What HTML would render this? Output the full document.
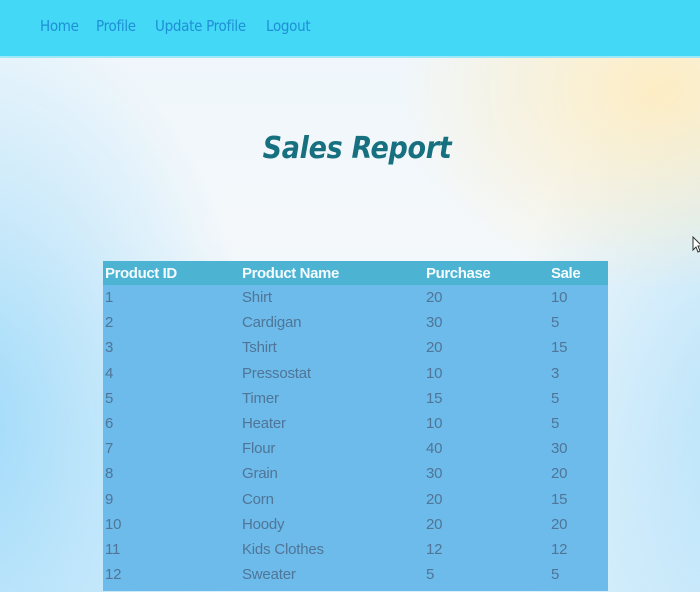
<!DOCTYPE html>
<html><head><meta charset="utf-8"><style>
html,body{margin:0;padding:0;width:700px;height:592px;overflow:hidden}
body{font-family:"Liberation Sans",sans-serif;position:relative;
background:
radial-gradient(ellipse 260px 200px at 660px 90px,rgba(255,236,190,.9),rgba(255,236,190,0)),
radial-gradient(ellipse 300px 420px at -40px 420px,rgba(150,215,250,.9),rgba(150,215,250,0)),
radial-gradient(ellipse 260px 380px at 760px 420px,rgba(170,222,250,.8),rgba(170,222,250,0)),
linear-gradient(180deg,#eef6fb 0%,#f4f8fb 40%,#dcf0fb 100%);}
.nav{position:absolute;left:0;top:0;width:700px;height:58px;background:#42d8f6;border-bottom:2px solid #9fe8f8;box-sizing:border-box}
.nav a{position:absolute;top:17px;font-size:15px;color:#1f8fd6;text-decoration:none;font-family:"DejaVu Sans Condensed","Liberation Sans",sans-serif;letter-spacing:-0.3px}
h1{position:absolute;left:0;width:714px;text-align:center;top:131px;margin:0;font-size:30px;font-style:italic;font-weight:bold;color:#17707f;font-family:"DejaVu Sans Condensed","Liberation Sans",sans-serif;letter-spacing:-0.3px}
table{position:absolute;left:103px;top:261px;width:505px;border-collapse:collapse;background:#6dbbea}
th{background:#4cb3d3;color:#f4fbff;font-weight:bold;text-align:left;height:24px;font-size:15px;padding:0 0 0 2px;letter-spacing:-0.4px}
td{height:25.2px;padding:0 0 0 2px;font-size:15px;color:#4f7598;letter-spacing:-0.2px}
tr.pad td{height:4px}
</style></head><body>
<div class="nav"><a style="left:40px">Home</a><a style="left:96px">Profile</a><a style="left:155px">Update Profile</a><a style="left:266px">Logout</a></div>
<h1>Sales Report</h1>
<table>
<colgroup><col style="width:137px"><col style="width:184px"><col style="width:125px"><col></colgroup>
<tr><th>Product ID</th><th>Product Name</th><th>Purchase</th><th>Sale</th></tr>
<tr><td>1</td><td>Shirt</td><td>20</td><td>10</td></tr>
<tr><td>2</td><td>Cardigan</td><td>30</td><td>5</td></tr>
<tr><td>3</td><td>Tshirt</td><td>20</td><td>15</td></tr>
<tr><td>4</td><td>Pressostat</td><td>10</td><td>3</td></tr>
<tr><td>5</td><td>Timer</td><td>15</td><td>5</td></tr>
<tr><td>6</td><td>Heater</td><td>10</td><td>5</td></tr>
<tr><td>7</td><td>Flour</td><td>40</td><td>30</td></tr>
<tr><td>8</td><td>Grain</td><td>30</td><td>20</td></tr>
<tr><td>9</td><td>Corn</td><td>20</td><td>15</td></tr>
<tr><td>10</td><td>Hoody</td><td>20</td><td>20</td></tr>
<tr><td>11</td><td>Kids Clothes</td><td>12</td><td>12</td></tr>
<tr><td>12</td><td>Sweater</td><td>5</td><td>5</td></tr>
<tr class="pad"><td></td><td></td><td></td><td></td></tr>
</table>
<svg style="position:absolute;left:692px;top:236px" width="10" height="18" viewBox="0 0 10 18"><path d="M1 1 L1 14 L4 11 L6 16 L8 15 L6 10 L10 10 Z" fill="#fff" stroke="#333" stroke-width="1"/></svg>
</body></html>
